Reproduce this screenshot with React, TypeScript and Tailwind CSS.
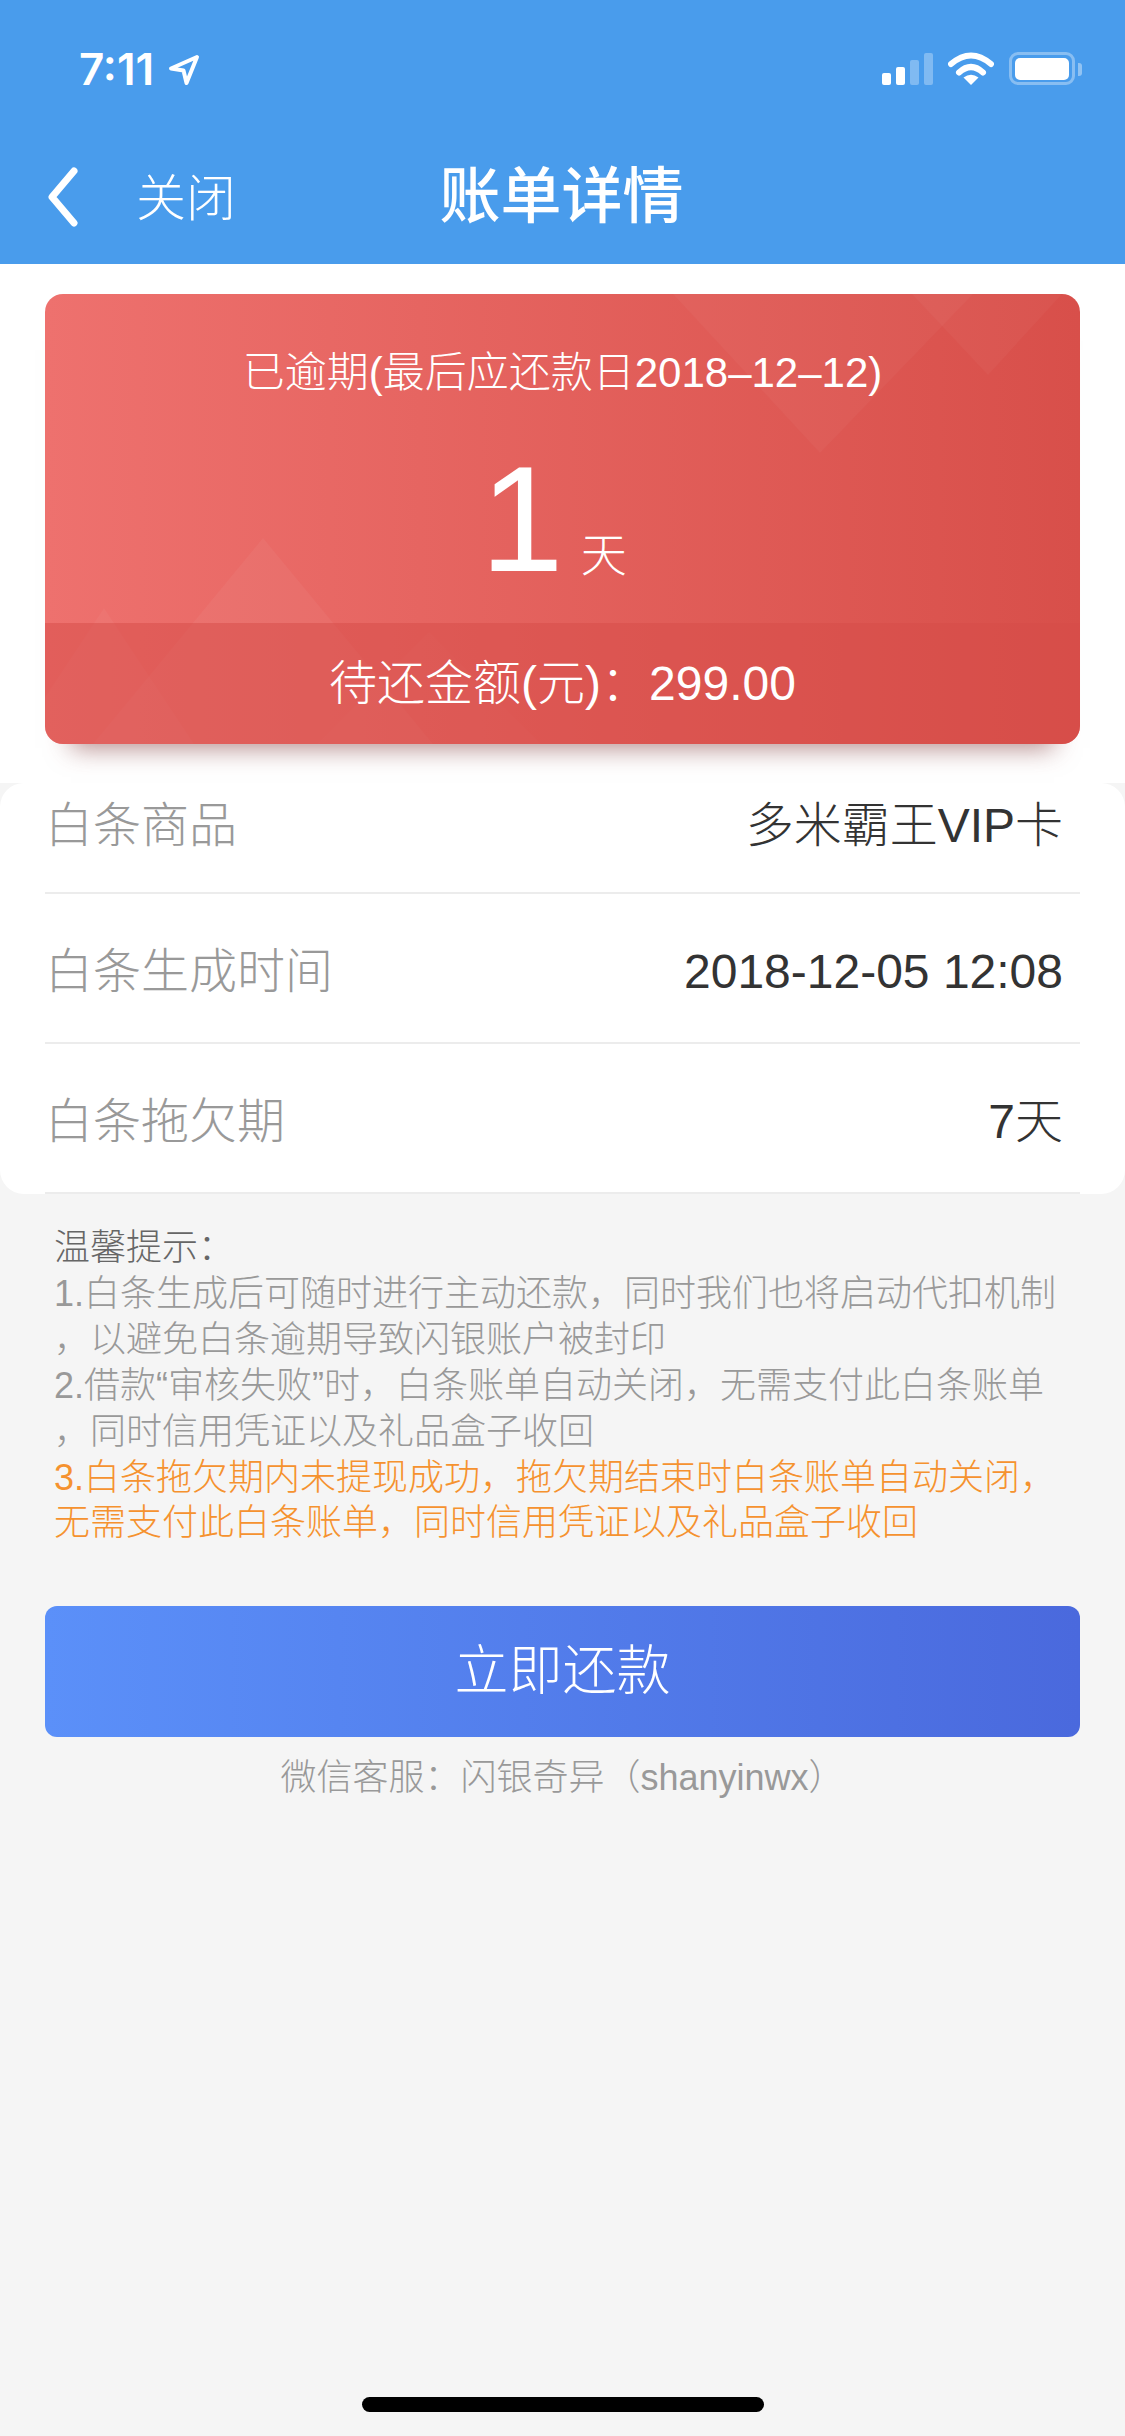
const FONT = "font-['Liberation_Sans','Noto_Sans_CJK_SC',sans-serif]";

function StatusBar() {
  return (
    <div className="flex h-[110px] shrink-0 items-start justify-between pt-[52px] pl-[79px] pr-[43px]">
      <div className="flex items-center">
        <span className="font-['Inter',sans-serif] text-[44px] leading-[34px] font-semibold text-white">7:11</span>
        <svg className="ml-[14px] mt-[1px]" width="32" height="32" viewBox="0 0 32 32" fill="none">
          <path d="M29 3 L3 14.5 L15.5 16.5 L18.5 29 Z" stroke="#fff" strokeWidth="4" strokeLinejoin="round" />
        </svg>
      </div>
      <div className="flex items-end">
        <div className="flex h-[33px] items-end gap-[5px]">
          <div className="h-[12px] w-[9px] rounded-[2px] bg-white" />
          <div className="h-[18px] w-[9px] rounded-[2px] bg-white" />
          <div className="h-[25px] w-[9px] rounded-[2px] bg-white/30" />
          <div className="h-[32px] w-[9px] rounded-[2px] bg-white/30" />
        </div>
        <svg className="ml-[15px]" width="46" height="33" viewBox="0 0 46 33" fill="none">
          <path d="M3 12 Q23 -5 43 12" stroke="#fff" strokeWidth="6" strokeLinecap="round" />
          <path d="M11 20.5 Q23 9.5 35 20.5" stroke="#fff" strokeWidth="6" strokeLinecap="round" />
          <path d="M23 33 L15.5 25.5 Q23 20 30.5 25.5 Z" fill="#fff" />
        </svg>
        <div className="ml-[15px] flex h-[33px] w-[66px] items-center justify-center rounded-[9px] border-[3px] border-white/35">
          <div className="h-[22px] w-[54px] rounded-[5px] bg-white" />
        </div>
        <div className="mb-[9px] ml-[3px] h-[13px] w-[4px] rounded-r-[3px] bg-white/40" />
      </div>
    </div>
  );
}

function NavBar() {
  return (
    <div className="relative flex h-[154px] shrink-0 items-start pl-[47px] pt-[57px]">
      <svg width="32" height="60" viewBox="0 0 32 60" fill="none">
        <path d="M27 4 L5 30 L27 56" stroke="#fff" strokeWidth="7" strokeLinecap="round" strokeLinejoin="round" />
      </svg>
      <span className="ml-[57px] mt-[2px] text-[50px] leading-[60px] font-light text-white">关闭</span>
      <div className="absolute left-0 right-[2px] top-[51px] text-center text-[61px] leading-[72px] font-medium text-white">账单详情</div>
    </div>
  );
}

function Card() {
  return (
    <div className="relative flex h-[450px] flex-col overflow-hidden rounded-[18px] bg-gradient-to-r from-[#ee716e] to-[#d84f4a] text-white">
      <svg className="absolute inset-0" width="1035" height="450" viewBox="0 0 1035 450" fill="none">
        <path d="M628 0 L775 159 L928 0 Z" fill="#fff" fillOpacity="0.03" />
        <path d="M867 0 L943 81 L1017 0 Z" fill="#fff" fillOpacity="0.03" />
        <path d="M218 244 L48 450 L388 450 Z" fill="#fff" fillOpacity="0.045" />
        <path d="M59 314 L-31 450 L149 450 Z" fill="#fff" fillOpacity="0.035" />
        <path d="M384 338 L272 450 L496 450 Z" fill="#fff" fillOpacity="0.025" />
      </svg>
      <div className="relative flex flex-1 flex-col items-center pt-[54px]">
        <div className="text-[42px] leading-[50px] font-light">已逾期(最后应还款日2018–12–12)</div>
        <div className="mt-[46px] ml-[-18px] flex items-baseline">
          <span className="text-[150px] leading-[150px]">1</span>
          <span className="ml-[17px] text-[46px] leading-[50px] font-light">天</span>
        </div>
      </div>
      <div className="relative flex h-[121px] items-center justify-center bg-[#d64c47]/50 text-[48px] font-light">
        <span>待还金额(元)：299.00</span>
      </div>
    </div>
  );
}

function Row({ label, value, first }: { label: string; value: string; first?: boolean }) {
  return (
    <div className={first ? "flex h-[111px] items-center justify-between border-b-2 border-[#ececec] pb-[23px] pr-[17px] text-[48px]" : "flex h-[150px] items-center justify-between border-b-2 border-[#ececec] pt-[8px] pr-[17px] text-[48px]"}>
      <span className="font-light text-[#999999]">{label}</span>
      <span className="font-light text-[#333333]">{value}</span>
    </div>
  );
}

export default function App() {
  return (
    <div className={`${FONT} flex h-[2436px] w-[1125px] flex-col overflow-hidden bg-[#f5f5f5]`}>
      <header className="flex h-[264px] shrink-0 flex-col bg-[#499cec]">
        <StatusBar />
        <NavBar />
      </header>

      <section className="h-[519px] shrink-0 bg-white px-[45px] pt-[30px]">
        <div className="rounded-[18px] shadow-[0_30px_24px_-26px_rgba(130,60,60,0.6)]">
          <Card />
        </div>
      </section>

      <section className="h-[411px] shrink-0 rounded-[24px] bg-white px-[45px]">
        <Row first label="白条商品" value="多米霸王VIP卡" />
        <Row label="白条生成时间" value="2018-12-05 12:08" />
        <Row label="白条拖欠期" value="7天" />
      </section>

      <section className="whitespace-nowrap px-[54px] pt-[31px] text-[36px] leading-[45.9px] font-light text-[#999999]">
        <div className="text-[#666666]">温馨提示：</div>
        <div>1.白条生成后可随时进行主动还款，同时我们也将启动代扣机制</div>
        <div>，以避免白条逾期导致闪银账户被封印</div>
        <div>2.借款“审核失败”时，白条账单自动关闭，无需支付此白条账单</div>
        <div>，同时信用凭证以及礼品盒子收回</div>
        <div className="text-[#f5922f]">3.白条拖欠期内未提现成功，拖欠期结束时白条账单自动关闭，</div>
        <div className="text-[#f5922f]">无需支付此白条账单，同时信用凭证以及礼品盒子收回</div>
      </section>

      <button className="mx-[45px] mt-[60px] flex h-[131px] shrink-0 items-center justify-center rounded-[12px] bg-gradient-to-r from-[#5b90f9] to-[#4a69dd] text-[54px] font-light text-white">
        立即还款
      </button>

      <div className="mt-[18px] text-center text-[36px] leading-[46px] font-light text-[#999999]">微信客服：闪银奇异（shanyinwx）</div>

      <div className="mt-auto mb-[24px] h-[15px] w-[402px] shrink-0 self-center rounded-full bg-black" />
    </div>
  );
}
